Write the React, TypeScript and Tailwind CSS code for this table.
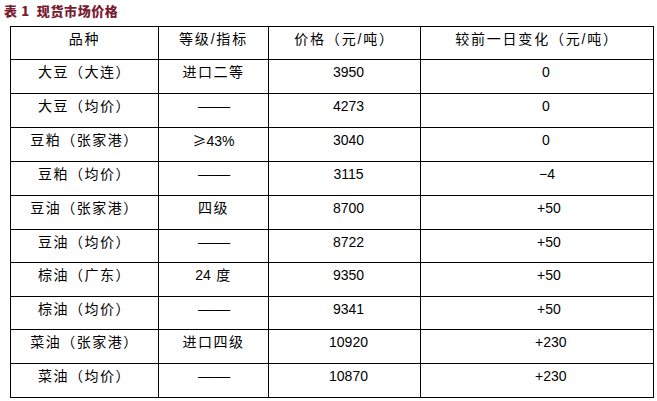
import React from "react";

type Row = {
  name: string;
  grade: React.ReactNode;
  price: string;
  change: string;
  h: string;
  cpl: string;
};

const cjk = "font-['Noto_Sans_CJK_SC',sans-serif]";

const Dash = () => (
  <span className="inline-block tracking-normal scale-x-[1.15]">——</span>
);

const rows: Row[] = [
  { name: "大豆（大连）", grade: "进口二等", price: "3950", change: "0", h: "h-[34px]", cpl: "pl-[121px]" },
  { name: "大豆（均价）", grade: <Dash />, price: "4273", change: "0", h: "h-[34px]", cpl: "pl-[121px]" },
  {
    name: "豆粕（张家港）",
    grade: (
      <span className="tracking-normal">
        <span className={cjk}>≥</span>43%
      </span>
    ),
    price: "3040",
    change: "0",
    h: "h-[34px]",
    cpl: "pl-[121px]",
  },
  { name: "豆粕（均价）", grade: <Dash />, price: "3115", change: "−4", h: "h-[34px]", cpl: "pl-[118px]" },
  { name: "豆油（张家港）", grade: "四级", price: "8700", change: "+50", h: "h-[34px]", cpl: "pl-[116px]" },
  { name: "豆油（均价）", grade: <Dash />, price: "8722", change: "+50", h: "h-[33px]", cpl: "pl-[116px]" },
  {
    name: "棕油（广东）",
    grade: (
      <>
        <span className="tracking-normal">24</span> 度
      </>
    ),
    price: "9350",
    change: "+50",
    h: "h-[34px]",
    cpl: "pl-[116px]",
  },
  { name: "棕油（均价）", grade: <Dash />, price: "9341", change: "+50", h: "h-[33px]", cpl: "pl-[116px]" },
  { name: "菜油（张家港）", grade: "进口四级", price: "10920", change: "+230", h: "h-[34px]", cpl: "pl-[114px]" },
  { name: "菜油（均价）", grade: <Dash />, price: "10870", change: "+230", h: "h-[34px]", cpl: "pl-[114px]" },
];

const font = "font-['Liberation_Sans','Noto_Sans_CJK_SC',sans-serif]";

export default function App() {
  return (
    <div className={`w-[657px] h-[401px] bg-white text-black ${font}`}>
      <div className="h-[26px] pl-[4px] pt-[4px] text-[13px] leading-[14px] font-black text-[#7a1d33] font-['Noto_Sans_CJK_SC',sans-serif] tracking-[0.6px] whitespace-pre">
        表 1  现货市场价格
      </div>
      <div className="ml-[10px] w-[644px] border-l border-t border-black">
        <div className="flex h-[33px] text-[14px] leading-[14px] tracking-[1.8px]">
          <div className="w-[148px] border-r border-b border-black text-center pt-[5px]">品种</div>
          <div className="w-[110px] border-r border-b border-black text-center pt-[5px]">等级/指标</div>
          <div className="w-[152px] border-r border-b border-black text-center pt-[5px]">价格（元/吨）</div>
          <div className="w-[233px] border-r border-b border-black text-center pt-[5px]">较前一日变化（元/吨）</div>
        </div>
        {rows.map((r, i) => (
          <div key={i} className={`flex ${r.h} text-[14px] leading-[14px]`}>
            <div className="w-[148px] border-r border-b border-black text-center pt-[5px] tracking-[1.5px]">{r.name}</div>
            <div className="w-[110px] border-r border-b border-black text-center pt-[5px] tracking-[1.5px]">{r.grade}</div>
            <div className="w-[152px] border-r border-b border-black text-center pt-[5px] pl-[8px]">{r.price}</div>
            <div className={`w-[233px] border-r border-b border-black text-left pt-[5px] ${r.cpl}`}>{r.change}</div>
          </div>
        ))}
      </div>
    </div>
  );
}
